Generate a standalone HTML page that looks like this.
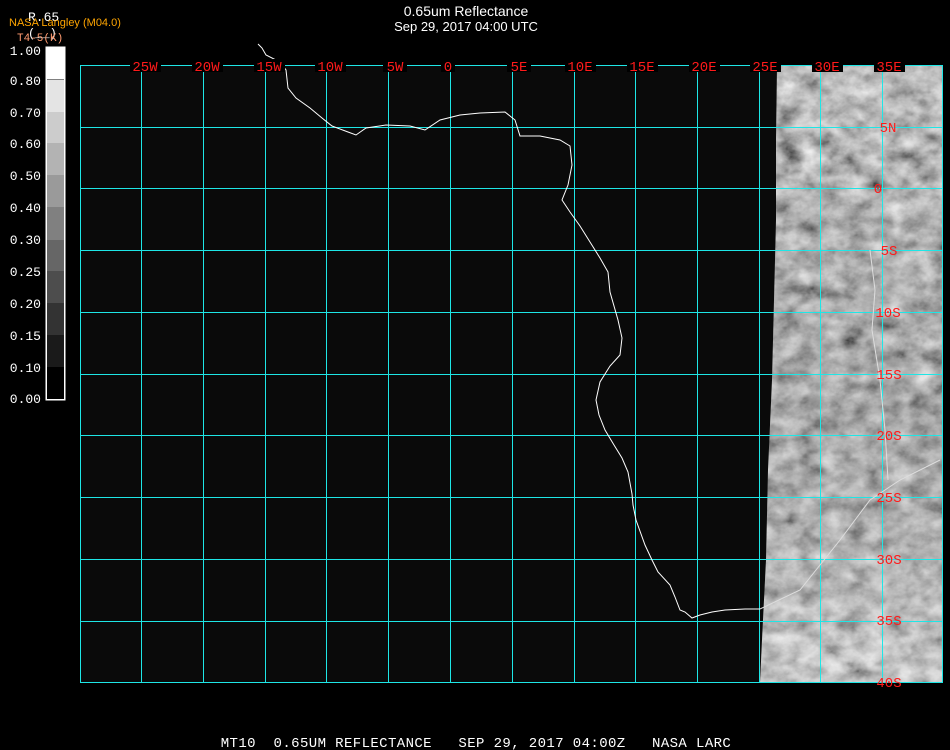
<!DOCTYPE html>
<html><head><meta charset="utf-8"><style>
html,body{margin:0;padding:0;background:#000;width:950px;height:750px;overflow:hidden}
svg{display:block}
text{font-family:"Liberation Mono",monospace}
</style></head><body>
<svg width="950" height="750" viewBox="0 0 950 750" xmlns="http://www.w3.org/2000/svg">
<defs>
<filter id="n" x="0" y="0" width="100%" height="100%">
<feTurbulence type="fractalNoise" baseFrequency="0.045 0.06" numOctaves="4" seed="7"/>
<feColorMatrix type="matrix" values="0.33 0.33 0.33 0 0  0.33 0.33 0.33 0 0  0.33 0.33 0.33 0 0  0 0 0 0 1"/>
<feComponentTransfer><feFuncR type="linear" slope="1.8" intercept="-0.4"/><feFuncG type="linear" slope="1.8" intercept="-0.4"/><feFuncB type="linear" slope="1.8" intercept="-0.4"/></feComponentTransfer>
</filter>
<linearGradient id="g" x1="0" y1="0" x2="0" y2="1">
<stop offset="0" stop-color="#000" stop-opacity="0"/>
<stop offset="0.5" stop-color="#000" stop-opacity="0.1"/>
<stop offset="1" stop-color="#fff" stop-opacity="0.25"/>
</linearGradient>
<clipPath id="strip"><path d="M777 65 L943 65 L943 683 L760 683 L762 640 L766 560 L768 470 L772 380 L774 300 L776 220 L776 140 Z"/></clipPath>
</defs>
<rect x="80" y="65" width="863" height="618" fill="#0a0a0a"/>
<g clip-path="url(#strip)">
<rect x="755" y="60" width="195" height="630" filter="url(#n)"/>
<rect x="755" y="60" width="195" height="630" fill="url(#g)"/>
</g>
<g stroke="#1ee6e6" stroke-width="1" shape-rendering="crispEdges">
<line x1="80.5" y1="65" x2="80.5" y2="683"/>
<line x1="141.5" y1="65" x2="141.5" y2="683"/>
<line x1="203.5" y1="65" x2="203.5" y2="683"/>
<line x1="265.5" y1="65" x2="265.5" y2="683"/>
<line x1="326.5" y1="65" x2="326.5" y2="683"/>
<line x1="388.5" y1="65" x2="388.5" y2="683"/>
<line x1="450.5" y1="65" x2="450.5" y2="683"/>
<line x1="512.5" y1="65" x2="512.5" y2="683"/>
<line x1="574.5" y1="65" x2="574.5" y2="683"/>
<line x1="635.5" y1="65" x2="635.5" y2="683"/>
<line x1="697.5" y1="65" x2="697.5" y2="683"/>
<line x1="759.5" y1="65" x2="759.5" y2="683"/>
<line x1="820.5" y1="65" x2="820.5" y2="683"/>
<line x1="882.5" y1="65" x2="882.5" y2="683"/>
<line x1="942.5" y1="65" x2="942.5" y2="683"/>
<line x1="80" y1="65.5" x2="943" y2="65.5"/>
<line x1="80" y1="127.5" x2="943" y2="127.5"/>
<line x1="80" y1="188.5" x2="943" y2="188.5"/>
<line x1="80" y1="250.5" x2="943" y2="250.5"/>
<line x1="80" y1="312.5" x2="943" y2="312.5"/>
<line x1="80" y1="374.5" x2="943" y2="374.5"/>
<line x1="80" y1="435.5" x2="943" y2="435.5"/>
<line x1="80" y1="497.5" x2="943" y2="497.5"/>
<line x1="80" y1="559.5" x2="943" y2="559.5"/>
<line x1="80" y1="621.5" x2="943" y2="621.5"/>
<line x1="80" y1="682.5" x2="943" y2="682.5"/>
</g>
<polyline fill="none" stroke="#fff" stroke-width="1" points="258,44 262,48 266,55 280,62 286,70 288,88 296,98 310,108 322,118 332,126 348,132 356,135 366,128 386,125 410,126 425,130 440,120 460,115 480,113 505,112 515,120 520,136 540,136 560,140 570,146 572,165 568,185 562,200 570,212 580,226 590,242 600,258 608,272 610,292 618,320 622,338 620,355 610,366 600,382 596,400 599,415 605,430 614,445 622,458 628,472 632,494 633,505 636,520 645,545 652,560 658,572 670,585 675,597 680,610 685,612 692,618 700,615 712,612 725,610 745,609 760,609"/>
<polyline fill="none" stroke="#ddd" stroke-width="1" points="760,609 800,590 840,540 870,500 900,480 940,460"/>
<polyline fill="none" stroke="#ddd" stroke-width="1" points="870,250 875,290 872,330 880,380 885,430 888,480"/>
<g fill="#ff1a1a" font-size="14" text-anchor="middle">
<rect x="130" y="59" width="31" height="13" fill="#000"/><text x="145" y="71">25W</text>
<rect x="192" y="59" width="31" height="13" fill="#000"/><text x="207" y="71">20W</text>
<rect x="254" y="59" width="31" height="13" fill="#000"/><text x="269" y="71">15W</text>
<rect x="315" y="59" width="31" height="13" fill="#000"/><text x="330" y="71">10W</text>
<rect x="383" y="59" width="24" height="13" fill="#000"/><text x="395" y="71">5W</text>
<rect x="441" y="59" width="14" height="13" fill="#000"/><text x="448" y="71">0</text>
<rect x="507" y="59" width="24" height="13" fill="#000"/><text x="519" y="71">5E</text>
<rect x="565" y="59" width="31" height="13" fill="#000"/><text x="580" y="71">10E</text>
<rect x="627" y="59" width="31" height="13" fill="#000"/><text x="642" y="71">15E</text>
<rect x="689" y="59" width="31" height="13" fill="#000"/><text x="704" y="71">20E</text>
<rect x="750" y="59" width="31" height="13" fill="#000"/><text x="765" y="71">25E</text>
<rect x="812" y="59" width="31" height="13" fill="#000"/><text x="827" y="71">30E</text>
<rect x="874" y="59" width="31" height="13" fill="#000"/><text x="889" y="71">35E</text>
<text x="888" y="132">5N</text>
<text x="878" y="193">0</text>
<text x="889" y="255">5S</text>
<text x="888" y="317">10S</text>
<text x="889" y="379">15S</text>
<text x="889" y="440">20S</text>
<text x="889" y="502">25S</text>
<text x="889" y="564">30S</text>
<text x="889" y="625">35S</text>
<text x="889" y="687">40S</text>
</g>
<g fill="#fff" text-anchor="middle">
<text x="466" y="16" style="font-family:'Liberation Sans',sans-serif;font-size:14px">0.65um Reflectance</text>
<text x="466" y="31" style="font-family:'Liberation Sans',sans-serif;font-size:13px">Sep 29, 2017 04:00 UTC</text>
</g>
<text x="28" y="21" fill="#fff" font-size="13">R.65</text>
<text x="28" y="37" fill="#fff" font-size="12">(__)</text>
<text x="9" y="26" fill="#ffa500" font-size="11" style="font-family:'Liberation Sans',sans-serif">NASA Langley (M04.0)</text>
<text x="17" y="41" fill="#ff9a70" font-size="11">T4-5(K)</text>
<g shape-rendering="crispEdges">
<rect x="46" y="47" width="19" height="353" fill="#000" stroke="#fff"/>
<rect x="46.5" y="47.5" width="18" height="32" fill="#fff"/>
<rect x="46.5" y="80" width="18" height="32" fill="#e4e4e4"/>
<rect x="46.5" y="112" width="18" height="31" fill="#cccccc"/>
<rect x="46.5" y="143" width="18" height="32" fill="#b3b3b3"/>
<rect x="46.5" y="175" width="18" height="32" fill="#9a9a9a"/>
<rect x="46.5" y="207" width="18" height="33" fill="#808080"/>
<rect x="46.5" y="240" width="18" height="31" fill="#666"/>
<rect x="46.5" y="271" width="18" height="32" fill="#4d4d4d"/>
<rect x="46.5" y="303" width="18" height="32" fill="#333"/>
<rect x="46.5" y="335" width="18" height="32" fill="#1a1a1a"/>
<rect x="46.5" y="367" width="18" height="32" fill="#000"/>
<rect x="46.5" y="47.5" width="18" height="352" fill="none" stroke="#fff"/>
</g>
<g fill="#fff" font-size="13" text-anchor="end">
<text x="41" y="55">1.00</text>
<text x="41" y="85">0.80</text>
<text x="41" y="117">0.70</text>
<text x="41" y="148">0.60</text>
<text x="41" y="180">0.50</text>
<text x="41" y="212">0.40</text>
<text x="41" y="244">0.30</text>
<text x="41" y="276">0.25</text>
<text x="41" y="308">0.20</text>
<text x="41" y="340">0.15</text>
<text x="41" y="372">0.10</text>
<text x="41" y="403">0.00</text>
</g>
<text x="476" y="747" fill="#fff" font-size="14" letter-spacing="0.4" text-anchor="middle" xml:space="preserve">MT10  0.65UM REFLECTANCE   SEP 29, 2017 04:00Z   NASA LARC</text>
</svg>
</body></html>
